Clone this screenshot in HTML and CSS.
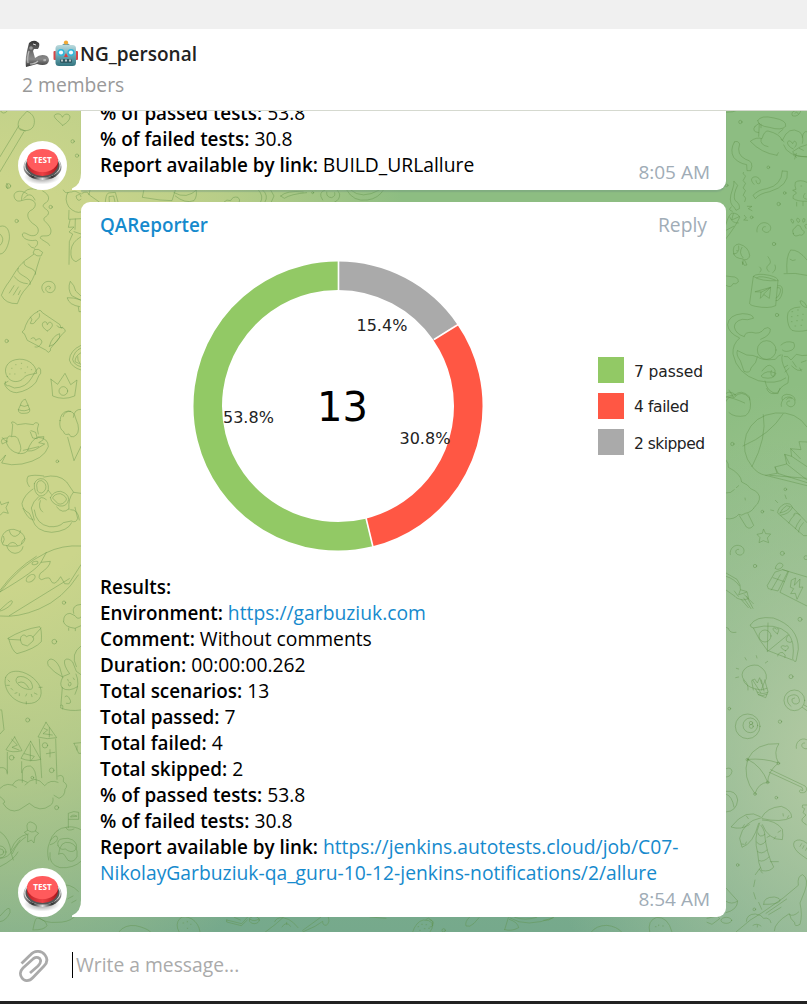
FILE: index.html
```html
<!DOCTYPE html>
<html lang="en">
<head>
<meta charset="utf-8">
<title>NG_personal</title>
<link rel="stylesheet" href="styles.css">
</head>
<body>
<div class="titlebar"></div>
<header class="header">
  <h1 class="chat-name">
    <svg class="emoji" viewBox="0 0 26 27" aria-hidden="true">
      <defs><linearGradient id="arm" x1="0" y1="0" x2="0" y2="1"><stop offset="0" stop-color="#333"/><stop offset=".5" stop-color="#777"/><stop offset=".7" stop-color="#888"/><stop offset="1" stop-color="#333"/></linearGradient></defs>
      <path d="M5 3Q8 0 12 1L15 3Q16 6 14 9L10 9L9 11L11 18Q17 13 23 16Q27 20 23 24Q19 26 13 24L2 27Q1 20 3 11Z" fill="url(#arm)"/>
      <path d="M5 11Q3 18 4 23M6 24Q11 24 14 21" fill="none" stroke="#bbb" stroke-width="1.2"/>
      <circle cx="7" cy="8" r="1.8" fill="#999"/><circle cx="20.500" cy="20" r="1.8" fill="#888"/><path d="M9 4L12 5M19.500 20H22" stroke="#ddd"/>
    </svg><svg class="emoji" viewBox="0 0 26 27" aria-hidden="true">
      <defs><linearGradient id="bot" x1="0" y1="0" x2="0" y2="1"><stop offset="0" stop-color="#bcdadd"/><stop offset=".5" stop-color="#69a9b5"/><stop offset="1" stop-color="#34747f"/></linearGradient></defs>
      <rect x="0.5" y="11" width="3" height="9" rx="1" fill="#d84747"/><rect x="22" y="11" width="3" height="9" rx="1" fill="#d84747"/>
      <path d="M9 5Q13 1 17 5Z" fill="#6b9ba3"/><circle cx="13" cy="2.5" r="2.1" fill="#f2a934"/>
      <rect x="2.5" y="5" width="20.5" height="21" rx="3.5" fill="url(#bot)"/>
      <circle cx="8" cy="12.5" r="3.6" fill="#31b6db"/><circle cx="18" cy="12.5" r="3.6" fill="#31b6db"/><circle cx="8" cy="12.5" r="2.1" fill="#effcff"/><circle cx="18" cy="12.5" r="2.1" fill="#effcff"/>
      <path d="M13 13L15 17H11Z" fill="#db4040"/><rect x="7" y="19" width="12" height="4" rx="1.5" fill="#315c66"/><path d="M9 19.500V21.500M13 19.500V21.500M17 19.500V21.500" stroke="#eee" stroke-width="1.5"/>
    </svg><span>NG_personal</span>
  </h1>
  <div class="members">2 members</div>
</header>
<main class="messages">
  <svg class="wallpaper" viewBox="0 110 807 822" aria-hidden="true">
    <defs>
      <g id="spiral"><path d="M-21 14C-25-4-7-20 10-12C28-3 19 18 5 15C-9 12-7-4 4-2"/></g>
    </defs>
    <g class="doodle" transform="translate(0 0) scale(.33333)">
      <path d="M188 376C173 361 157 351 165 344C176 338 185 344 187 352C193 339 209 340 210 351C209 361 199 370 188 376"/>
      <path d="M82 334C100 342 106 356 102 374C98 390 80 396 60 389C50 377 54 360 66 350ZM56 378L0 470M72 395L0 515M60 386L76 393"/>
      <circle cx="218" cy="424" r="5"/><circle cx="231" cy="467" r="5"/><path d="M0 330Q8 348 22 333M65 600C62 580 80 560 110 568M72 595C84 580 96 580 105 600M20 550C30 560 20 575 20 558"/>
    </g>
    <g class="doodle" transform="translate(0 180) scale(.33333)">
      <circle cx="25" cy="18" r="7"/>
      <path d="M246 40Q262 30 268 45L298 66M270 30L267 44M316 66Q317 45 325 39L346 37L354 66M328 66L327 50L341 48L345 66M432 28L427 52L480 60L516 62L526 30M522 38Q560 60 592 28M526 48Q555 72 582 62Q593 48 588 28M672 66Q680 56 692 62Q698 48 714 52Q722 60 718 66M775 30Q792 48 782 66M788 30Q807 47 795 66M812 30L822 48L814 66M842 48Q860 30 910 36M842 48L853 55Q872 42 920 38M968 60Q952 38 975 30M1004 66Q1020 60 1019 42L1012 30M980 36Q978 52 995 53Q1008 48 1004 38M1040 30Q1060 66 1102 60Q1135 56 1152 28M1052 30Q1086 60 1138 30"/><circle cx="938" cy="38" r="3"/>
    </g>
    <g class="doodle" transform="translate(0 190) scale(.33333)">
      <path d="M82 12C60-5 35 6 44 25C54 43 68 26 88 28C113 32 110 54 91 62C75 73 86 94 105 105C122 116 115 137 100 137C84 139 75 122 67 132C66 146 87 154 104 151C115 148 116 165 106 171M128 3C151 14 151 33 133 41C119 55 151 57 145 72C139 83 128 80 133 92C141 100 159 116 151 132C146 143 123 133 121 142C119 149 148 158 149 166M85 162Q94 176 104 175"/>
      <path d="M0 109C22 102 30 125 28 147C23 176 11 193 0 192M0 132Q14 145 5 160L0 166"/>
      <path d="M105 178Q115 174 128 187L123 198Q110 201 100 190ZM101 193L76 211C47 235 40 260 20 285Q10 300 4 316Q17 342 52 341Q61 316 70 305Q103 271 112 228L120 203M72 216C67 236 110 230 107 253M55 235C42 256 100 260 90 284M28 309L42 287M40 315L55 291M55 314L61 302M43 260Q57 280 82 281"/>
      <circle cx="50" cy="93" r="5"/><circle cx="152" cy="51" r="5"/><circle cx="20" cy="453" r="5"/><circle cx="172" cy="814" r="4"/>
      <path d="M190 0C198 15 205 5 215 6C228 0 232 8 243 12M243 28Q232 38 228 18Q242 8 243 20M204 7Q191 27 207 52Q228 72 243 66M207 61L206 88L243 86M210 90L205 112L222 111L207 126L218 132L208 155L207 223M226 87L225 118M243 140Q215 156 213 181Q210 210 228 215L243 205M222 125L243 132"/>
      <path d="M132 308C116 291 131 273 147 274C171 275 171 306 151 308C132 307 134 286 149 289Q156 295 148 297"/>
      <path d="M211 274Q224 286 227 303L243 318M210 276Q202 297 215 317L243 331M202 323Q221 322 243 330M202 325Q207 345 239 350M235 351L237 365H243"/>
      <path d="M113 365Q120 355 127 368L180 404L183 414Q193 411 196 424L188 431L152 475Q153 485 145 487L137 480L82 451L73 431Q61 427 73 419L77 406Q90 375 113 365ZM92 381Q100 388 91 400Q102 405 109 390Q122 383 118 371M142 423C129 415 122 404 131 396Q141 393 142 404C147 391 158 397 157 408Q152 418 142 423M93 446Q104 438 107 451Q122 439 126 456Q118 475 105 471M148 469Q156 438 179 431Q183 441 170 455Q161 466 148 469M171 407Q176 416 188 412"/>
      <path d="M22 560C8 540 20 514 47 509C77 502 108 520 110 550C90 554 78 553 66 569C50 579 31 576 22 560ZM16 575Q15 590 27 587L43 594Q78 593 94 565L106 545Q118 525 122 540Q125 551 116 558L108 577Q85 603 50 608Q29 608 16 588L13 580L24 574M35 535h1M47 524h1M64 520h1M63 536h1M44 552h1M29 552h1M82 531h1M75 548h1M94 539h1"/>
      <path d="M243 466Q210 481 208 510Q215 532 243 540M243 474Q222 483 218 508Q221 525 243 530M243 488Q225 498 225 515L243 523M233 500Q232 512 239 519"/>
      <path d="M153 568L173 583L195 550L212 584L231 570Q227 599 224 618Q190 632 158 618Q156 590 153 568Z"/><circle cx="190" cy="603" r="13"/>
      <path d="M75 628Q65 630 61 646L55 659Q55 672 73 670Q92 670 89 658L80 636ZM61 646Q73 653 85 646M55 659Q74 667 89 657"/>
      <path d="M180 692Q182 665 205 663Q223 665 226 682L234 704Q240 732 221 740Q211 744 207 732Q193 737 191 725Q176 716 180 692ZM220 682Q222 657 243 658M203 742L222 812L243 769M189 680Q194 662 212 664"/>
      <path d="M38 704Q29 692 43 697L52 704Q77 698 100 704Q107 693 116 702L112 717L115 732M38 706L35 739Q19 734 20 760Q29 784 55 790Q69 781 57 754Q52 734 35 740M93 722L107 727L112 746L98 744L91 726M55 790Q71 794 82 783Q97 784 106 779L134 762L116 758Q133 752 132 740L114 741Q93 750 83 781M7 743Q13 753 22 754L7 762Q-3 744 20 744M115 742Q145 744 145 770Q133 808 66 822Q34 828 5 819L17 795L0 813M70 781L116 770"/>
      <path d="M0 934L4 944L26 936L18 953L25 970L10 966L0 976M88 890Q76 874 84 859Q101 853 131 858M132 861Q175 850 200 876L221 907L243 910M103 881Q110 862 130 867Q147 875 145 898Q138 919 119 918Q101 910 103 881M110 885Q111 871 125 872Q141 880 137 897Q126 918 113 904ZM151 923Q161 903 182 904Q206 911 206 929Q201 951 179 948Q155 942 151 923M158 923Q164 911 181 911Q201 919 199 930Q189 945 176 942ZM99 897Q73 914 66 940Q66 958 88 970L98 990M116 920Q98 935 94 954L103 990M145 901L154 913M116 930Q122 915 139 929M121 932Q113 955 128 966M220 907Q203 927 207 958M170 951Q188 974 206 957M212 959Q235 958 238 990"/>
    </g>
    <g class="doodle" transform="translate(0 510) scale(.33333)">
      <path d="M69-5Q84 28 97 28Q108 65 155 67Q205 63 215 38M103 0Q108 43 148 50Q178 52 190 38L214 33Q229 40 233 25L225-8"/>
      <path d="M4 91C5 70 20 57 42 58Q72 66 75 87Q70 104 53 108Q30 111 10 105ZM20 107Q25 128 45 130Q66 128 69 110M28 62Q32 80 46 79Q63 72 61 62M24 105Q39 88 52 106M11 79Q16 88 9 99M74 85Q64 93 64 101"/>
      <path d="M0 246Q61 166 137 129Q187 104 243 108M0 241Q46 178 109 139M139 127L123 157Q110 181 0 246M123 157L151 154Q150 170 121 190Q112 206 125 209Q151 197 152 211Q162 233 182 200L194 221L206 222L243 164M28 317L208 206M0 318Q52 324 117 297Q189 267 235 195M0 300Q28 273 34 272Q42 274 29 288Q10 302 0 303"/><ellipse cx="92" cy="205" rx="15" ry="9" transform="rotate(-35 92 205)"/><ellipse cx="105" cy="159" rx="9" ry="5" transform="rotate(-15 105 159)"/>
      <path d="M24 385Q67 358 119 350Q126 357 124 395Q106 416 51 431Q36 424 26 386ZM27 388L62 390M98 382L123 354M66 402C52 380 72 367 80 381C90 370 108 381 98 394L83 407Z"/>
      <circle cx="192" cy="278" r="5"/><circle cx="163" cy="395" r="7"/><circle cx="83" cy="630" r="6"/><circle cx="170" cy="893" r="6"/>
      <path d="M221 310Q213 285 243 283M191 333Q190 311 210 310L225 317Q233 331 243 321M190 334Q193 351 225 355L243 347M206 354V361M226 356V362"/>
      <path d="M17 502C8 530 30 570 70 579C106 586 127 569 123 540C119 516 88 488 56 484C32 482 22 491 17 502M53 501Q72 494 92 514Q103 535 93 538Q72 540 54 523Q42 510 53 501M55 518Q73 509 86 534M24 510l5 5M20 526h8M33 535l5 5M45 550l6-2M58 557v-6M77 558l3-6M96 560l-2-7M111 553l-8-4M117 532h9M79 582v-7"/>
      <path d="M189 502Q160 487 145 467Q138 450 153 447Q168 449 179 472L187 500Q200 495 209 491Q190 466 194 451Q203 441 218 456L229 484L243 494M188 502Q177 523 187 534Q205 547 233 530M187 532L182 594Q208 605 243 600M243 408Q210 431 229 470M203 508l2 5M220 504l3 5M207 518q7-5 6 7q-8 8-8-3M228 492Q241 520 225 553M195 560Q202 551 211 571Q216 583 199 580M182 586Q191 580 188 597"/>
      <path d="M0 601Q5 594 6 607L12 659L0 672M44 681L18 719Q35 730 66 722L44 681ZM92 694L63 745Q92 757 122 748L92 694ZM138 637L114 681Q142 690 170 683L138 637ZM22 727V789M65 755V788M118 687L125 803M167 687L171 808M67 817V785Q70 767 91 768Q110 776 109 821M35 688L52 705L36 712L57 720M91 704V750M73 731L103 739L92 753M132 655L143 660L129 671L157 675M148 653V681M139 731L164 727M150 719V741"/><circle cx="35" cy="743" r="7"/><circle cx="135" cy="706" r="8"/><circle cx="155" cy="781" r="7"/><circle cx="97" cy="803" r="4"/>
      <path d="M0 773Q22 769 22 792M0 835Q22 812 49 832M38 824Q51 798 82 817M75 825Q106 790 134 827Q151 807 174 817M174 798Q194 790 190 815Q207 825 195 838Q195 858 177 865L162 856M0 860Q23 877 9 880Q28 911 57 900L88 880Q120 910 151 886Q161 880 159 864"/>
      <path d="M205 953V910Q222 901 236 907V928L206 928M212 920Q216 911 230 918ZM146 1050Q139 1020 148 1000Q161 953 204 951Q221 948 243 959M174 1007Q169 988 189 986Q205 982 218 990Q237 1003 225 1021Q213 1030 196 1017Q180 1022 174 1007M151 991Q170 968 173 985Q171 998 151 1004M198 953Q202 966 222 957M0 965Q30 985 33 1028L40 1050M33 1020Q48 978 85 972M37 1031Q51 997 77 981M81 946Q84 931 98 938Q115 945 107 962Q95 971 83 960ZM83 961L73 967L83 975V996L94 990L102 999L105 980L116 970L106 963"/><circle cx="0" cy="1026" r="18"/><circle cx="2" cy="1026" r="9"/>
      <path d="M222 700L243 698M222 700L236 730H243M231 708V720"/>
    </g>
    <g class="doodle" transform="translate(0 840) scale(.33333)">
      <path d="M0 55Q25 55 40 27L60 0M0 80Q44 58 54 36M150 38Q145 74 180 83Q220 86 243 64M176 42Q190 37 194 46L204 61Q221 70 231 50Q235 15 210 8Q180 0 176 42M0 245Q18 243 30 218Q32 197 17 210L0 228M99 268Q105 235 111 234Q137 238 141 257Q134 270 99 270M117 234Q137 250 170 247Q235 248 243 190M113 230Q105 225 117 218M180 136Q210 128 235 154M204 176L219 168M215 188L228 181M357 275Q375 253 407 257Q440 264 452 276M537 275Q524 253 540 235Q553 225 576 237Q596 250 600 275"/>
      <path d="M549 249h2M562 244v2M572 253h1M562 265h1M680 240L725 251L742 232M703 232L721 240M680 240V246L724 257L742 240"/><ellipse cx="763" cy="240" rx="15" ry="11"/><path d="M750 238Q765 247 777 236"/>
    </g>
    <g class="doodle" transform="translate(70 905) scale(.33333)">
      <path d="M586 81L616 58L640 37M614 50Q620 37 638 38Q658 41 670 53L684 68M636 66Q648 46 662 64M650 52V58M698 76L752 37M698 81L735 64L758 49Q757 61 769 61Q781 51 775 37M900 36L948 40M1028 81Q1038 50 1060 45Q1079 44 1087 55Q1090 70 1080 81M1068 43Q1077 35 1081 44Q1094 48 1088 61M1044 65h2M1055 58h2M1068 59h2M1049 76h2M1063 71h2M1076 70h2"/>
    </g>
    <g class="doodle" transform="translate(430 905) scale(.33333)">
      <path d="M0 44Q13 50 6 57Q12 65 0 66M118 37Q104 50 108 63Q119 68 132 55L147 38M224 74L235 38M224 74Q245 80 266 68Q263 51 238 43M240 39Q291 70 370 38M254 37Q285 48 320 37M341 46Q355 49 370 38M484 81Q497 62 530 61Q560 64 575 81M659 81Q651 47 680 37Q714 35 726 81M676 65h2M686 60v2M698 63h2"/><circle cx="41" cy="76" r="5"/>
    </g>
    <g class="doodle" transform="translate(707 100) scale(.33333)">
      <path d="M57 37Q79 37 94 30M267 31Q249 36 257 48Q275 51 281 34M264 40Q269 31 274 42"/><circle cx="100" cy="66" r="5"/><circle cx="184" cy="202" r="4"/><circle cx="215" cy="312" r="5"/><circle cx="233" cy="279" r="4"/><circle cx="201" cy="432" r="5"/><circle cx="210" cy="645" r="5"/><circle cx="59" cy="256" r="4"/><circle cx="134" cy="352" r="4"/>
      <path d="M152 62Q161 44 201 54Q240 61 236 79Q223 93 187 82Q154 78 152 62M157 70L155 109M162 73V83M228 88L215 99M144 79L155 71M144 79Q132 95 155 98M210 166Q162 159 130 124Q148 110 165 116Q172 92 183 93Q217 101 226 121Q245 76 278 96Q292 109 286 130M286 112Q289 91 300 95M162 117Q158 135 183 140M210 165L214 158M222 118L231 125M230 135Q240 169 300 171M259 147C238 138 237 120 250 123L257 131C262 114 276 131 263 142M300 134Q279 138 257 155Q262 172 300 170M277 145L289 151M259 165l10 7M268 160l-5 17"/>
      <path d="M82 126Q68 151 80 172Q93 189 119 194L120 212L131 212Q143 184 116 178Q87 164 98 132Q92 120 82 126M226 213L241 214Q247 257 188 275Q158 280 145 296L138 286Q154 269 179 266Q224 256 226 213M109 217Q105 221 112 224T112 235T112 246T112 257T112 268T112 279T112 290T113 305M141 253C125 237 137 228 150 231Q165 239 158 250Q149 255 147 242M81 244L92 256Q77 285 84 301Q100 312 97 326L87 331Q82 320 76 317Q64 301 76 270Q82 254 81 244M73 321Q60 329 76 334M121 319L135 319L124 326L135 332M112 346L118 354L110 360L122 361"/>
      <path d="M300 247Q278 237 265 247Q262 257 267 268L257 271Q269 275 268 280Q255 285 258 295Q271 305 300 304M269 307V318M288 306V317M282 258h2M294 280Q281 295 300 298M254 366q-6-10 1-8q9 4 4 11zM269 360q-1-8 6-4q8 8-1 11zM287 360q1-8 7-3q1 10-5 10zM300 373Q288 372 297 385M259 401Q253 388 265 383Q270 371 280 379Q283 391 292 395Q290 408 278 405Q260 413 259 401Z"/>
      <path d="M57 373Q64 345 75 339Q94 340 98 352Q86 379 57 416M68 351Q76 371 94 369M79 341L74 360L97 350M57 391L80 379"/>
      <use href="#spiral" x="171" y="382"/><path d="M80 461Q74 434 96 432Q125 440 128 466Q126 480 112 479L120 495L112 496L106 485L107 494L109 477Q83 475 80 461M105 442Q94 458 108 473M95 438Q99 461 80 462M89 452h2M57 528L73 530Q95 530 94 546Q87 554 78 551Q72 566 57 556"/>
      <path d="M183 470Q198 489 183 496Q174 505 186 515M204 495Q210 509 197 518M158 501Q167 508 159 516M139 529Q149 518 187 526Q213 532 213 542L206 617Q185 627 145 619Q126 615 128 609L139 529Q161 545 213 542M149 533Q160 524 205 540M213 557Q229 553 226 578Q219 604 207 602M211 563Q225 560 219 579Q214 593 207 594M145 575L191 562L187 595L171 584L160 595L162 577ZM162 577L191 562L168 584"/>
      <path d="M300 480Q275 448 251 450Q236 469 240 518M231 521Q264 517 300 526M249 478Q257 485 265 480M300 623Q283 621 279 603Q289 599 300 620M279 621Q240 622 241 651Q242 681 255 691Q273 697 300 691M255 635h2M272 630h2M253 650h2M271 647h2M287 643h2M253 665h2M269 662h2M285 660h2M264 678h2M282 676h2"/>
      <path d="M139 653Q138 642 107 641Q65 644 62 674Q64 699 98 714Q76 733 78 762Q89 821 154 842Q208 855 236 834M139 655Q121 662 106 658Q83 663 82 681Q86 702 112 710Q113 696 135 697Q159 705 172 686Q184 679 190 687Q192 706 161 718M91 752Q86 764 100 782L111 814Q130 822 132 804Q150 787 151 771Q140 765 119 765L92 752M151 770Q163 783 205 778Q216 763 222 764M222 735Q237 720 260 728Q267 742 255 750Q235 759 226 750M226 765Q220 780 235 809L245 830L243 849Q215 862 213 881Q180 879 174 843M232 769Q244 766 252 780L268 763Q286 769 300 766M232 802L242 796M234 816L246 805M163 827Q179 807 207 820Q201 840 169 833ZM165 813Q184 788 194 799Q212 809 199 830Q188 826 193 812M257 785L268 801M278 804l5 9M283 787l14-5M254 798Q274 818 285 809"/><circle cx="179" cy="750" r="28"/>
      <path d="M57 880Q70 870 86 885M57 891L85 883M71 879L66 870M83 886Q102 865 127 890L128 900M226 900Q220 886 239 883Q261 883 265 900M239 898Q243 890 254 895"/>
    </g>
    <g class="doodle" transform="translate(707 390) scale(.33333)">
      <path d="M57 34Q63 17 82 22Q104-3 128 25Q137 61 116 77Q83 84 66 68M57 21Q79 23 113 39M79 21L72 9M179-5Q184 12 201 11Q217 9 219-5"/>
      <use href="#spiral" x="244" y="35"/><use href="#spiral" x="91" y="480"/>
      <path d="M300 111Q268 63 206 69Q141 76 118 133Q101 188 135 229Q152 252 176 256L210 250L204 231L239 222L233 193L254 199L251 176L282 179L276 155L300 156M135 230Q181 142 169 74M108 168Q190 133 228 72M176 256L300 287M189 256L300 265M212 250L300 278M239 222L300 270M254 199L300 230M204 231L213 249M233 193L247 221M251 176L280 206"/>
      <circle cx="76" cy="162" r="5"/><circle cx="235" cy="298" r="4"/><circle cx="166" cy="365" r="4"/><circle cx="226" cy="490" r="6"/><circle cx="144" cy="528" r="5"/><circle cx="279" cy="688" r="6"/><circle cx="252" cy="860" r="6"/><circle cx="297" cy="503" r="6"/>
      <path d="M57 210Q67 223 64 232Q102 251 104 276Q124 284 131 296Q162 308 157 329Q153 344 144 349Q134 367 115 370Q103 379 95 373Q82 390 57 386M58 309Q71 311 82 299M88 293l7-6M114 324l1 6M97 377L118 411Q130 420 140 406L123 371"/>
      <path d="M170 418L176 431L191 432L181 444L185 458L169 452L156 458L159 443L150 433L165 430ZM212 367Q213 352 232 342Q252 337 256 353Q247 372 220 376ZM219 369Q225 355 239 347L250 350Q244 363 219 369M222 378L290 437H300M255 351L300 398M260 375Q262 363 279 375M263 374Q251 386 245 399M281 387Q268 404 265 416M289 398Q275 412 274 426M205 331l7 7M234 315l4 11M191 360l9 2"/>
      <path d="M57 549L90 568Q103 586 100 599L120 605L125 626L109 630Q87 626 84 619L57 600M57 559Q82 566 97 587M82 603L94 619M100 600L95 614L118 607M119 619L138 655M110 624L132 656M103 629L124 653M112 614L139 641"/>
      <path d="M205 535Q208 520 219 519Q233 522 225 532Q212 543 205 535M205 546L227 539L243 544L213 603L184 596L181 588ZM227 539L300 561M245 544L219 607L300 648M198 563L232 575M220 554L193 600M254 570L266 564L262 586L279 567L277 592L288 591L270 628L265 610L251 611L260 596L251 592Z"/>
      <path d="M130 705Q146 677 199 684Q275 710 274 778L267 814Q262 817 257 807Q265 756 243 730Q206 696 139 714Q129 712 130 705M139 714Q156 752 181 781L256 810M183 699L181 785L242 735M211 731C199 724 193 712 203 714Q208 715 209 718C217 711 217 722 211 731ZM235 782C223 777 217 769 228 767L235 769C245 763 249 777 235 782ZM212 798Q214 785 228 788Q238 795 234 803M245 735Q232 747 241 755Q250 760 255 755"/><circle cx="174" cy="738" r="18"/>
      <path d="M57 712Q67 714 66 720Q72 730 87 727M123 900Q125 883 112 871Q98 854 113 837Q129 822 153 826Q181 841 178 866Q170 878 163 900M139 900L134 872L143 867L151 879L158 863L164 881M148 797l2 7M182 814l-7 5M118 810l-4-7M95 837l-7-2M95 861l-9 2"/>
    </g>
    <g class="doodle" transform="translate(707 680) scale(.33333)">
      <path d="M109 0Q113 18 146 27L154 44L176 53L183 35L173 0M137 0L161 38M163 0L171 33M146 27Q163 34 180 25M151 36Q164 45 182 37M154 44Q167 50 180 43"/>
      <circle cx="67" cy="86" r="4"/><circle cx="219" cy="125" r="5"/><circle cx="208" cy="353" r="4"/><circle cx="92" cy="555" r="4"/><circle cx="142" cy="688" r="4"/>
      <circle cx="122" cy="139" r="37"/><circle cx="130" cy="136" r="22"/><circle cx="132" cy="129" r="5"/><circle cx="133" cy="139" r="6"/><circle cx="262" cy="61" r="31"/><path d="M252 79Q236 67 244 50Q262 39 273 49Q284 69 268 72Q254 73 255 57L263 54M286 82L300 92M291 75L300 80M57 266Q73 260 75 274Q72 291 57 291M57 334Q88 330 92 360Q89 394 57 396M57 342Q76 349 81 381"/>
      <use href="#spiral" x="289" y="191"/>
      <path d="M122 238Q146 187 216 191Q198 215 214 249Q172 234 122 238M122 238Q105 292 144 341Q154 309 182 307Q165 259 122 238M182 307Q182 274 214 249M187 277L285 322Q292 337 281 329Q273 333 280 338Q302 341 298 323L294 318L191 269"/><circle cx="121" cy="239" r="4"/><circle cx="214" cy="250" r="4"/><circle cx="182" cy="307" r="4"/><circle cx="144" cy="342" r="4"/>
      <path d="M160 410Q118 382 72 441Q103 451 127 434M160 414Q109 424 98 475L105 502Q139 491 155 430M163 414Q179 382 223 379Q254 390 254 412Q222 429 166 416M166 420Q207 421 226 448Q229 466 226 479Q184 480 166 434M158 429Q139 475 152 519Q153 550 164 572Q190 576 200 561Q178 522 172 455Q168 444 162 436M153 459Q157 476 174 463M149 486Q160 504 177 483M151 514Q163 526 180 510M157 542Q169 548 186 531M190 545H214M107 442l5-8M124 416l-6-8M180 472l8-4M201 477l5-7M221 452l-8 5M241 414l4-7M229 408l-1-7M104 492l7 1M115 493l3-7M160 563L145 584M157 568L166 579M144 600L140 620M140 638L146 657M155 667L164 688"/>
      <path d="M300 375L287 375Q281 383 293 386L288 398L297 405L286 416Q281 425 297 433L300 436M300 490Q277 472 262 485Q254 499 275 519L300 537M279 499l5-8M287 505l4-8M296 511l4-8M57 624L92 663Q91 690 57 698M57 664Q74 675 91 664M88 755L130 720Q166 698 180 688Q230 656 274 616Q270 588 287 584Q307 597 293 634L279 669Q287 706 279 733Q262 743 263 728Q250 718 247 701Q202 728 202 752M118 724Q119 702 145 702Q163 704 170 715Q188 711 192 728M138 736Q149 728 162 738M151 736v5M170 673Q169 651 202 651Q222 655 219 663Q210 674 170 673M177 700L239 657M185 704L222 682M248 704Q259 711 275 696M0 715L31 708L38 716L15 733L0 727"/><ellipse cx="58" cy="721" rx="16" ry="9"/>
    </g>
  </svg>

  <div class="row first">
    <svg class="avatar" viewBox="0 0 49 49" role="img" aria-label="Test button">
      <defs>
        <linearGradient id="metal"><stop offset="0" stop-color="#999"/><stop offset=".25" stop-color="#333"/><stop offset=".5" stop-color="#ddd"/><stop offset=".75" stop-color="#333"/><stop offset="1" stop-color="#888"/></linearGradient>
        <radialGradient id="shade"><stop offset="0" stop-color="#888"/><stop offset="1" stop-color="#fff"/></radialGradient>
        <linearGradient id="side"><stop stop-color="#bd2027"/><stop offset=".5" stop-color="#ed4145"/><stop offset="1" stop-color="#a7151b"/></linearGradient>
      </defs>
      <circle cx="24.5" cy="24.5" r="24.5" fill="#fff"/><ellipse cx="24" cy="36" rx="18" ry="7.5" fill="url(#shade)"/>
      <ellipse cx="24.5" cy="26" rx="19" ry="13" fill="url(#metal)"/><ellipse cx="24.5" cy="24.5" rx="18.3" ry="12" fill="#ddd"/><ellipse cx="24.5" cy="25" rx="17" ry="11.5" fill="#555"/>
      <path d="M9 18V24Q11 34 24.5 35Q38 34 40 24V18Z" fill="url(#side)"/><ellipse cx="24.5" cy="19.5" rx="15.5" ry="11.5" fill="#ff5a5c"/>
      <text class="avatar-text" x="24.5" y="22" text-anchor="middle" textLength="18.5" lengthAdjust="spacingAndGlyphs">TEST</text>
    </svg>
    <article class="bubble">
      <svg class="tail" viewBox="0 0 9 17" aria-hidden="true"><path d="M9 0V17H0V15.5Q9 12 9 0Z" fill="#fff"/></svg>
      <p class="text"><b>% of passed tests:</b> 53.8<br><b>% of failed tests:</b> 30.8<br><b>Report available by link:</b> BUILD_URLallure</p>
      <time class="time">8:05 AM</time>
    </article>
  </div>
  <div class="row">
    <svg class="avatar" viewBox="0 0 49 49" role="img" aria-label="Test button">
      <circle cx="24.5" cy="24.5" r="24.5" fill="#fff"/><ellipse cx="24" cy="36" rx="18" ry="7.5" fill="url(#shade)"/>
      <ellipse cx="24.5" cy="26" rx="19" ry="13" fill="url(#metal)"/><ellipse cx="24.5" cy="24.5" rx="18.3" ry="12" fill="#ddd"/><ellipse cx="24.5" cy="25" rx="17" ry="11.5" fill="#555"/>
      <path d="M9 18V24Q11 34 24.5 35Q38 34 40 24V18Z" fill="url(#side)"/><ellipse cx="24.5" cy="19.5" rx="15.5" ry="11.5" fill="#ff5a5c"/>
      <text class="avatar-text" x="24.5" y="22" text-anchor="middle" textLength="18.5" lengthAdjust="spacingAndGlyphs">TEST</text>
    </svg>
    <article class="bubble report">
      <svg class="tail" viewBox="0 0 9 17" aria-hidden="true"><path d="M9 0V17H0V15.5Q9 12 9 0Z" fill="#fff"/></svg>
      <div class="author-line"><b class="author">QAReporter</b><span class="reply">Reply</span></div>
      <svg class="chart" viewBox="81 242 645 332">
        <g fill="none" stroke-width="28.5">
          <circle cx="338" cy="406" r="130.25" stroke="#92c965" pathLength="13" stroke-dasharray="7 6" transform="rotate(76.15 338 406)"/>
          <circle cx="338" cy="406" r="130.25" stroke="#aaa" pathLength="13" stroke-dasharray="2 11" transform="rotate(-90 338 406)"/>
          <circle cx="338" cy="406" r="130.25" stroke="#ff5744" pathLength="13" stroke-dasharray="4 9" transform="rotate(-34.6 338 406)"/>
        </g>
        <path d="M338.5 261V291M434 339.5L459 324M366 518L373 547" stroke="#fff" stroke-width="1.6"/>
        <g class="chart-text">
          <text x="356.500" y="331">15.4%</text><text x="223" y="423">53.8%</text><text x="399.500" y="444">30.8%</text>
          <text class="total" x="317" y="421">13</text>
          <g class="legend"><text x="634" y="377" textLength="69">7 passed</text><text x="634" y="412" textLength="55">4 failed</text><text x="634" y="449" textLength="71">2 skipped</text></g>
        </g>
        <path fill="#92c965" d="M598 357h26v26h-26z"/><path fill="#ff5744" d="M598 393h26v26h-26z"/><path fill="#aaa" d="M598 429h26v26h-26z"/>
      </svg>
      <p class="text"><b>Results:</b><br><b>Environment:</b> <a>https://garbuziuk.com</a><br><b>Comment:</b> Without comments<br><b>Duration:</b> 00:00:00.262<br><b>Total scenarios:</b> 13<br><b>Total passed:</b> 7<br><b>Total failed:</b> 4<br><b>Total skipped:</b> 2<br><b>% of passed tests:</b> 53.8<br><b>% of failed tests:</b> 30.8<br><b>Report available by link:</b> <a>https://jenkins.autotests.cloud/job/C07-<br>NikolayGarbuziuk-qa_guru-10-12-jenkins-notifications/2/allure</a></p>
      <time class="time">8:54 AM</time>
    </article>
  </div>
</main>
<footer class="composer">
  <svg class="clip" viewBox="0 0 30 34" aria-hidden="true"><path d="M2.5 13.5L11 5.3C16-.5 23 .8 26 5C29 9 28 13 25 16L14 27.5C10 32 5 31 3 28C.6 25 1 21 4 18L14.5 8.5C18 6 21 8 21.5 10C22 12 21 14 19 16L11 23" fill="none" stroke="#aaa" stroke-width="2.8"/></svg>
  <span class="caret"></span><span class="placeholder">Write a message...</span>
</footer>
</body>
</html>
```

FILE: styles.css
```css
* { box-sizing: border-box; }
body {
  margin: 0; width: 807px; height: 1004px; overflow: hidden;
  display: flex; flex-direction: column; background: #fff; color: #000;
  font: 19.3px/26px "Open Sans", "Noto Sans", sans-serif;
}
.titlebar { height: 29px; background: #f0f0f0; }
.header { height: 81px; padding: 11px 22px; }
.chat-name { display: flex; align-items: center; margin: 0; height: 27px; font-size: 19px; font-weight: 600; color: #222; }
.emoji { width: 26px; height: 27px; margin-left: 2px; }
.emoji + .emoji { margin: 0 2px 0 3px; }
.emoji + span { margin-left: -1px; }
.members { margin-top: 5px; color: #999; }
.messages {
  position: relative; height: 822px; overflow: hidden; display: flex; flex-direction: column; justify-content: flex-end; gap: 12px; padding: 0 0 15px 18px;
  border-top: 1px solid #d5d9cf;
  background:
    radial-gradient(ellipse 420px 640px at 0 33%, #cbd58b 0 32%, #cbd58bb0 60%, #cbd58b00 100%),
    radial-gradient(ellipse 300px 380px at 104% 79%, #b5cba4, #b5cba400),
    linear-gradient(#8dbd82 40%, #76a98c);
}
.wallpaper { position: absolute; left: 0; top: -1px; width: 807px; height: 822px; }
.doodle { fill: none; stroke: #5d9047; stroke-opacity: .42; stroke-width: 3; stroke-linecap: round; stroke-linejoin: round; }
.row { position: relative; display: flex; align-items: flex-end; gap: 14px; }
.avatar { width: 49px; height: 49px; flex: none; }
.avatar-text { font: 700 9.5px "Open Sans", sans-serif; fill: #fff; }
.bubble { position: relative; width: 645px; padding: 8px 19px; background: #fff; border-radius: 9px 9px 9px 0; }
.first .bubble { height: 97px; padding-top: 7px; box-shadow: 0 2px 1px #7298806e; }
.report { height: 715px; padding-top: 10px; }
.tail { position: absolute; left: -9px; bottom: 0; width: 9px; height: 17px; }
.text { margin: 0; white-space: nowrap; }
.text b, .author { font-size: 18.85px; font-weight: 600; }
.text a, .author { color: #168acd; }
.author-line { display: flex; justify-content: space-between; height: 26px; }
.reply, .time { color: #a0acb6; }
.time { position: absolute; right: 16px; bottom: 5px; font-size: 19px; }
.chart { display: block; width: 645px; height: 332px; margin: 4px 0 0 -19px; }
.chart-text { font: 16px "DejaVu Sans", sans-serif; fill: #222; }
.legend { font-size: 15.5px; }
.total { font-size: 40px; fill: #000; }
.composer { height: 72px; display: flex; align-items: center; padding: 0 19px; border-bottom: 3px solid #222; }
.clip { width: 30px; height: 34px; margin-top: 1px; }
.caret { width: 1px; height: 26px; margin: -4px 3px 0 23px; background: #000; }
.placeholder { color: #aaa; margin-top: -3px; }
```
